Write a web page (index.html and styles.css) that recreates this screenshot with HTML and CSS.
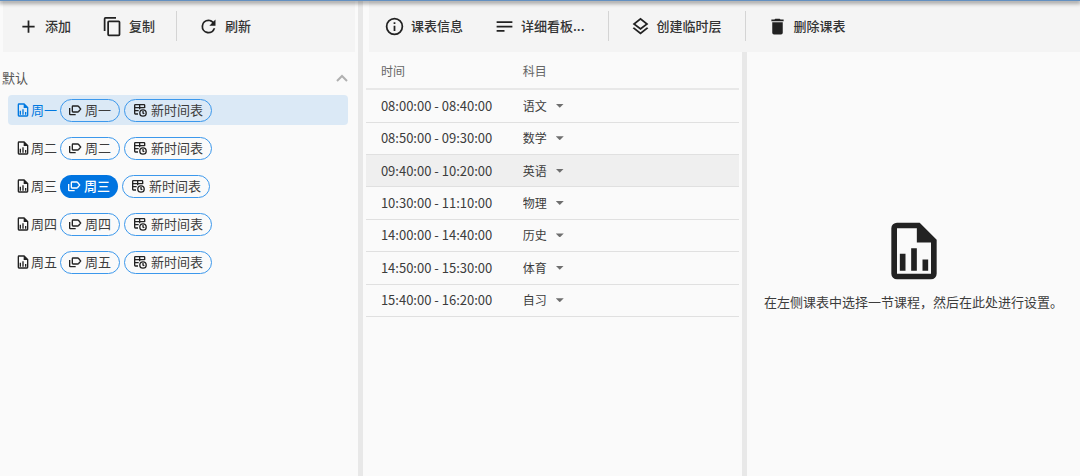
FILE: index.html
```html
<!DOCTYPE html>
<html lang="zh-CN">
<head>
<meta charset="utf-8">
<meta name="viewport" content="width=device-width, initial-scale=1">
<title>课表</title>
<link rel="stylesheet" href="styles.css">
</head>
<body>
<svg class="sprite" aria-hidden="true">
  <symbol id="plus" viewBox="0 0 24 24"><path d="M19 13h-6v6h-2v-6H5v-2h6V5h2v6h6z"/></symbol>
  <symbol id="copy" viewBox="0 0 24 24"><path d="M19 21H8V7h11m0-2H8a2 2 0 0 0-2 2v14a2 2 0 0 0 2 2h11a2 2 0 0 0 2-2V7a2 2 0 0 0-2-2m-3-4H4a2 2 0 0 0-2 2v14h2V3h12z"/></symbol>
  <symbol id="refresh" viewBox="0 0 24 24"><path d="M17.65 6.35A7.96 7.96 0 0 0 12 4a8 8 0 1 0 7.73 10h-2.08A6 6 0 1 1 12 6c1.66 0 3.14.69 4.22 1.78L13 11h7V4z"/></symbol>
  <symbol id="info" viewBox="0 0 24 24"><path d="M11 9h2V7h-2m1 13a8 8 0 1 1 0-16 8 8 0 0 1 0 16m0-18a10 10 0 1 0 0 20 10 10 0 0 0 0-20m-1 15h2v-6h-2z"/></symbol>
  <symbol id="lines" viewBox="0 0 24 24"><path d="M21 6v2H3V6zM3 18h9v-2H3zm0-5h18v-2H3z"/></symbol>
  <symbol id="layers" viewBox="0 0 24 24"><path d="M12 18.54l7.37-5.74L21 14.07l-9 7-9-7 1.62-1.26L12 18.54M12 16L3 9l9-7 9 7-9 7m0-11.47L6.26 9 12 13.47 17.74 9 12 4.53z"/></symbol>
  <symbol id="trash" viewBox="0 0 24 24"><path d="M19 4h-3.500l-1-1h-5l-1 1H5v2h14M6 19a2 2 0 0 0 2 2h8a2 2 0 0 0 2-2V7H6z"/></symbol>
  <symbol id="chart" viewBox="0 0 24 24"><path d="M14 2l6 6v12a2 2 0 0 1-2 2H6a2 2 0 0 1-2-2V4a2 2 0 0 1 2-2h8m4 18V9h-5V4H6v16h12M9 13v6H7v-6h2m8 2v4h-2v-4h2m-4-4v8h-2v-8h2z"/></symbol>
  <symbol id="labels" viewBox="0 0 24 24"><path class="line" d="M9 6h7a2 2 0 0 1 1.500.700L20.500 10.500l-3 3.800A2 2 0 0 1 16 15H9a1 1 0 0 1-1-1V7a1 1 0 0 1 1-1zM4 9v9a1 1 0 0 0 1 1h8"/></symbol>
  <symbol id="table-clock" viewBox="0 0 24 24"><path class="line" d="M9 18H5a1 1 0 0 1-1-1V5a1 1 0 0 1 1-1h13a1 1 0 0 1 1 1v4M4 8.500h15M4 13h6M11.500 4v7M16.500 13.500v3l2 1.200"/><circle class="line" cx="16.500" cy="16.500" r="4.800"/></symbol>
</svg>
<main class="app">
  <section class="sidebar">
    <div class="toolbar">
      <button class="tool"><svg><use href="#plus"/></svg>添加</button>
      <button class="tool"><svg><use href="#copy"/></svg>复制</button>
      <span class="divider"></span>
      <button class="tool"><svg><use href="#refresh"/></svg>刷新</button>
    </div>
    <button class="group" aria-expanded="true">默认<svg viewBox="0 0 12 8"><path d="M1 7l5-5 5 5"/></svg></button>
    <ul class="plans">
      <li class="plan active"><svg><use href="#chart"/></svg><span class="name">周一</span><button class="chip"><svg><use href="#labels"/></svg>周一</button><button class="chip table"><svg><use href="#table-clock"/></svg>新时间表</button></li>
      <li class="plan"><svg><use href="#chart"/></svg><span class="name">周二</span><button class="chip"><svg><use href="#labels"/></svg>周二</button><button class="chip table"><svg><use href="#table-clock"/></svg>新时间表</button></li>
      <li class="plan"><svg><use href="#chart"/></svg><span class="name">周三</span><button class="chip filled"><svg><use href="#labels"/></svg>周三</button><button class="chip table"><svg><use href="#table-clock"/></svg>新时间表</button></li>
      <li class="plan"><svg><use href="#chart"/></svg><span class="name">周四</span><button class="chip"><svg><use href="#labels"/></svg>周四</button><button class="chip table"><svg><use href="#table-clock"/></svg>新时间表</button></li>
      <li class="plan"><svg><use href="#chart"/></svg><span class="name">周五</span><button class="chip"><svg><use href="#labels"/></svg>周五</button><button class="chip table"><svg><use href="#table-clock"/></svg>新时间表</button></li>
    </ul>
  </section>
  <section class="editor">
    <div class="toolbar">
      <button class="tool"><svg><use href="#info"/></svg>课表信息</button>
      <button class="tool"><svg><use href="#lines"/></svg>详细看板...</button>
      <span class="divider"></span>
      <button class="tool"><svg><use href="#layers"/></svg>创建临时层</button>
      <span class="divider"></span>
      <button class="tool"><svg><use href="#trash"/></svg>删除课表</button>
    </div>
    <div class="panes">
      <div class="lessons">
        <table>
          <thead><tr><th>时间</th><th>科目</th></tr></thead>
          <tbody>
            <tr><td>08:00:00 - 08:40:00</td><td><span class="pick"><select aria-label="科目"><option>语文</option></select></span></td></tr>
            <tr><td>08:50:00 - 09:30:00</td><td><span class="pick"><select aria-label="科目"><option>数学</option></select></span></td></tr>
            <tr class="hover"><td>09:40:00 - 10:20:00</td><td><span class="pick"><select aria-label="科目"><option>英语</option></select></span></td></tr>
            <tr><td>10:30:00 - 11:10:00</td><td><span class="pick"><select aria-label="科目"><option>物理</option></select></span></td></tr>
            <tr><td>14:00:00 - 14:40:00</td><td><span class="pick"><select aria-label="科目"><option>历史</option></select></span></td></tr>
            <tr><td>14:50:00 - 15:30:00</td><td><span class="pick"><select aria-label="科目"><option>体育</option></select></span></td></tr>
            <tr><td>15:40:00 - 16:20:00</td><td><span class="pick"><select aria-label="科目"><option>自习</option></select></span></td></tr>
          </tbody>
        </table>
      </div>
      <div class="empty"><svg><use href="#chart"/></svg><p>在左侧课表中选择一节课程，然后在此处进行设置。</p></div>
    </div>
  </section>
</main>
</body>
</html>
```
FILE: styles.css
```css
* { box-sizing: border-box; }
body {
  margin: 0;
  background: #fafafa;
  color: #3c3c3c;
  font: 13px/20px "Noto Sans CJK SC", sans-serif;
}
button, select {
  font: inherit;
  color: inherit;
  background: none;
  border: 0;
  margin: 0;
  padding: 0;
}
svg { fill: currentColor; flex: none; }
.sprite { display: none; }
.line { fill: none; stroke: currentColor; stroke-width: 2; }
.app {
  position: relative;
  display: flex;
  min-height: 100vh;
}
.app::before {
  content: "";
  position: absolute;
  top: 0;
  left: 0;
  right: 0;
  height: 1px;
  background: #6490c0;
  box-shadow: 0 1px 4px 1px rgba(0, 0, 0, .5);
}
.sidebar {
  flex: 0 0 33.6%;
  border-right: 5px solid #e8e8e8;
}
.editor {
  flex: 1;
  display: flex;
  flex-direction: column;
}
.toolbar {
  display: flex;
  align-items: center;
  height: 52px;
  padding: 0 8px;
  background: #f4f4f4;
}
.sidebar .toolbar { margin: 0 3px; }
.editor .toolbar { margin-left: 6px; }
.tool {
  display: flex;
  align-items: center;
  height: 36px;
  padding: 0 16px 0 7px;
  gap: 6px;
  font-weight: 500;
  color: #333;
  white-space: nowrap;
}
.tool + .tool { margin-left: 8px; }
.tool svg { width: 21px; height: 21px; color: #222; }
.divider {
  width: 1px;
  height: 30px;
  margin: 0 14px 0 5px;
  background: #d4d4d4;
}
.editor .divider { margin-left: 7px; }
.group {
  display: flex;
  align-items: center;
  justify-content: space-between;
  width: 100%;
  margin-top: 16px;
  padding: 0 10px 0 2px;
  color: #555;
}
.group svg {
  width: 12px;
  height: 8px;
  fill: none;
  stroke: #b0b0b0;
  stroke-width: 2;
}
.plans {
  display: flex;
  flex-direction: column;
  gap: 8px;
  margin: 7px 10px 0 8px;
  padding: 0;
  list-style: none;
}
.plan {
  display: flex;
  align-items: center;
  height: 30px;
  padding-left: 7px;
  border-radius: 4px;
}
.plan svg { width: 16px; height: 16px; color: #222; }
.plan.active { background: #dbe9f6; }
.name { margin: 0 3px 0 0; }
.active .name, .active > svg { color: #0078e0; }
.chip {
  display: flex;
  align-items: center;
  gap: 2px;
  height: 23px;
  padding: 0 8px 0 6px;
  border: 1px solid #3c98ec;
  border-radius: 12px;
}
.chip + .chip { margin-left: 4px; }
.chip.table { padding-left: 7px; gap: 3px; }
.chip.filled {
  border: 0;
  background: #0074e0;
  color: #fff;
  font-weight: 500;
}
.plan .filled svg { color: #fff; }
.panes {
  flex: 1;
  display: flex;
}
.lessons {
  flex: 0 0 53.6%;
  padding: 2px 3px 0;
  border-right: 5px solid #e8e8e8;
}
table {
  width: 100%;
  height: 263px;
  table-layout: fixed;
  border-collapse: collapse;
}
th {
  height: 35px;
  font-size: 12px;
  font-weight: 400;
  color: #666;
  text-align: left;
}
th, td { padding: 0 0 0 15px; }
th:first-child { width: 38%; }
td { line-height: 20px; }
tr { border-bottom: 1px solid #e0e0e0; }
thead tr { border-bottom-width: 2px; border-color: #e8e8e8; }
.hover { background: #efefef; }
.pick { display: inline-grid; align-items: center; font-size: 12px; }
.pick select {
  grid-area: 1 / 1;
  width: 41px;
  height: 20px;
  appearance: none;
}
.pick::after {
  content: "";
  grid-area: 1 / 1;
  justify-self: end;
  width: 8px;
  height: 4px;
  background: #6e6e6e;
  clip-path: polygon(0 0, 100% 0, 50% 100%);
  pointer-events: none;
}
.empty {
  flex: 1;
  display: flex;
  flex-direction: column;
  align-items: center;
  justify-content: center;
}
.empty svg { width: 68px; height: 68px; color: #222; }
.empty p { margin: 7px 0 0; }
```
